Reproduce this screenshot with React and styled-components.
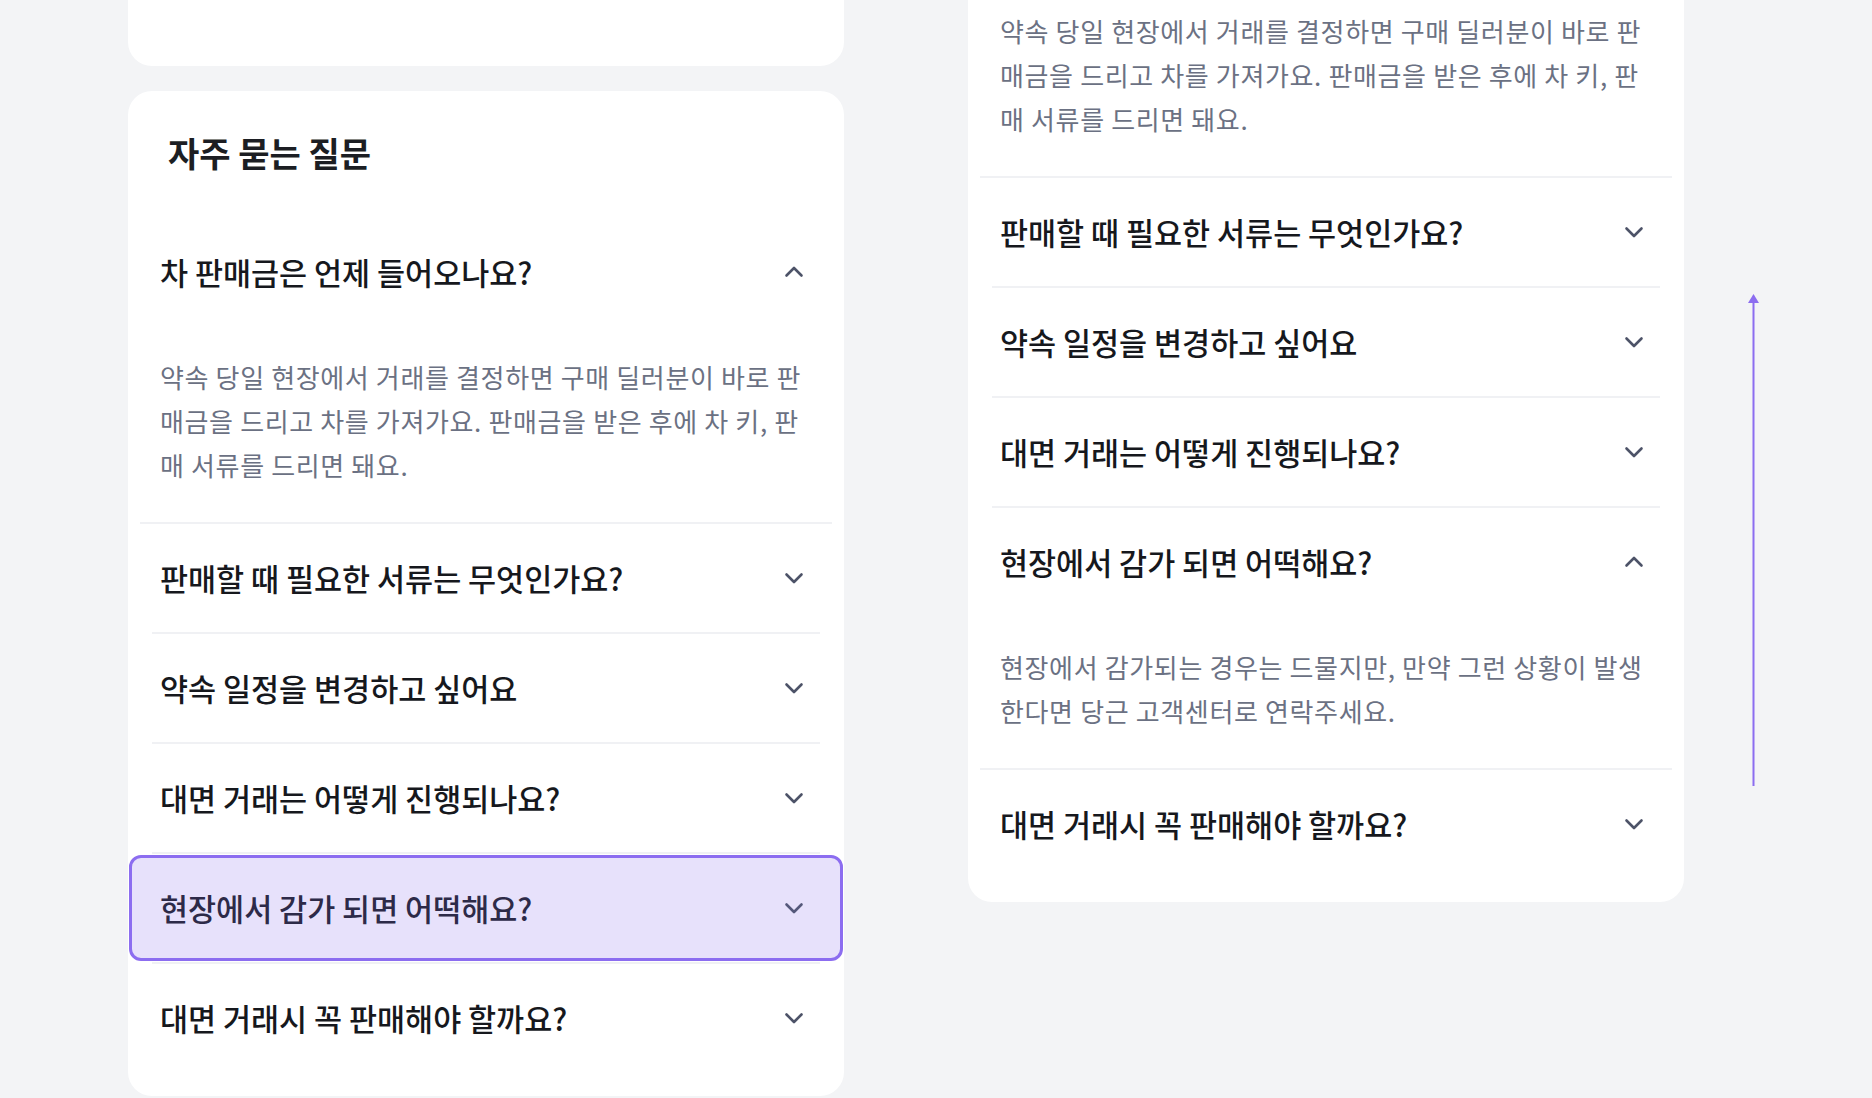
import React from 'react';
import styled, { createGlobalStyle } from 'styled-components';

const GlobalStyle = createGlobalStyle`
  html, body {
    margin: 0;
    padding: 0;
    background: #f3f4f6;
    overflow: hidden;
  }
  * {
    box-sizing: border-box;
  }
`;

const Page = styled.div`
  display: flex;
  align-items: flex-start;
  height: 1098px;
  padding-left: 128px;
  overflow: hidden;
  background: #f3f4f6;
  font-family: "Noto Sans CJK KR", "Noto Sans", sans-serif;
`;

const Column = styled.div`
  display: flex;
  flex-direction: column;
  gap: 25px;
  width: 716px;
  margin-left: ${(props) => props.$offsetLeft || 0}px;
  margin-top: ${(props) => props.$offsetTop || 0}px;
`;

const TopCard = styled.div`
  height: 166px;
  margin-top: -100px;
  background: #ffffff;
  border-radius: 24px;
`;

const Card = styled.section`
  background: #ffffff;
  border-radius: 24px;
  padding: 40px 0 24px;
`;

const Title = styled.h2`
  margin: 0 0 43px;
  padding: 0 40px;
  font-size: 34px;
  line-height: 44px;
  font-weight: 700;
  color: #1c1e23;
`;

const List = styled.div`
  display: flex;
  flex-direction: column;
`;

const Item = styled.div`
  margin: 0 ${(props) => (props.$open ? 12 : 24)}px;
  border-bottom: 2px solid #f0f1f4;

  &:last-child {
    border-bottom: none;
  }
`;

const Header = styled.div`
  display: flex;
  align-items: center;
  justify-content: space-between;
  height: 108px;
  padding: 0 ${(props) => (props.$open ? 28 : 16)}px 0 ${(props) => (props.$open ? 20 : 8)}px;

  ${(props) =>
    props.$focused &&
    `
    height: 106px;
    margin: 1px -23px;
    padding: 0 36px 0 28px;
    background: #e7e1fb;
    border: 3px solid #8c6df0;
    border-radius: 12px;
  `}
`;

const Question = styled.span`
  font-size: 30.5px;
  line-height: 40px;
  font-weight: 500;
  color: ${(props) => (props.$focused ? '#2d2a48' : '#16181d')};
`;

const Answer = styled.p`
  margin: 0;
  padding: 29px 22px 35px 20px;
  font-size: 26px;
  line-height: 44px;
  letter-spacing: 0.64px;
  color: #6b7183;
`;

const ChevronSvg = styled.svg`
  flex: none;
  width: 20px;
  height: 12px;
  transform: ${(props) => (props.$up ? 'rotate(180deg)' : 'none')};
`;

const ArrowCol = styled.div`
  margin-left: 64px;
  margin-top: 294px;
  width: 11px;
`;

const Chevron = ({ up, color }) => (
  <ChevronSvg $up={up} viewBox="0 0 20 12" fill="none">
    <path
      d="M2.5 2.5l7.5 7.5 7.5-7.5"
      stroke={color}
      strokeWidth="2.6"
      strokeLinecap="round"
      strokeLinejoin="round"
    />
  </ChevronSvg>
);

const faqs = [
  {
    q: '차 판매금은 언제 들어오나요?',
    a: '약속 당일 현장에서 거래를 결정하면 구매 딜러분이 바로 판매금을 드리고 차를 가져가요. 판매금을 받은 후에 차 키, 판매 서류를 드리면 돼요.',
  },
  { q: '판매할 때 필요한 서류는 무엇인가요?' },
  { q: '약속 일정을 변경하고 싶어요' },
  { q: '대면 거래는 어떻게 진행되나요?' },
  {
    q: '현장에서 감가 되면 어떡해요?',
    a: '현장에서 감가되는 경우는 드물지만, 만약 그런 상황이 발생한다면 당근 고객센터로 연락주세요.',
  },
  { q: '대면 거래시 꼭 판매해야 할까요?' },
];

const FaqCard = ({ openItems, focused }) => (
  <Card>
    <Title>자주 묻는 질문</Title>
    <List>
      {faqs.map((item, index) => {
        const open = openItems.includes(index);
        const isFocused = focused === index;
        return (
          <Item key={index} $open={open}>
            <Header $open={open} $focused={isFocused}>
              <Question $focused={isFocused}>{item.q}</Question>
              <Chevron up={open} color={isFocused ? '#55587a' : '#4d5368'} />
            </Header>
            {open && <Answer>{item.a}</Answer>}
          </Item>
        );
      })}
    </List>
  </Card>
);

const App = () => {
  return (
    <>
      <GlobalStyle />
      <Page>
        <Column>
          <TopCard />
          <FaqCard openItems={[0]} focused={4} />
        </Column>
        <Column $offsetLeft={124} $offsetTop={-255}>
          <FaqCard openItems={[0, 4]} />
        </Column>
        <ArrowCol>
          <svg width="11" height="492" viewBox="0 0 11 492">
            <polygon points="0,9 5.5,0 11,9" fill="#8c6df0" />
            <rect x="4.5" y="8" width="2" height="484" fill="#8c6df0" />
          </svg>
        </ArrowCol>
      </Page>
    </>
  );
};

export default App;
